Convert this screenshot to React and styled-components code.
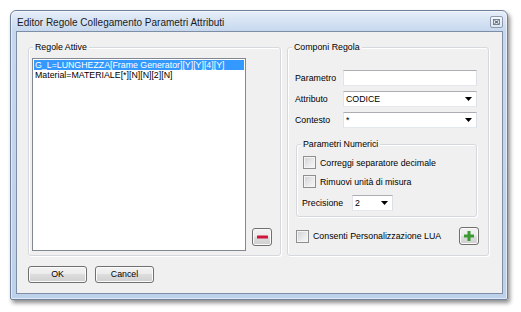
import React from "react";
import styled, { createGlobalStyle } from "styled-components";

const GlobalStyle = createGlobalStyle`
  html, body {
    margin: 0;
    padding: 0;
    background: #ffffff;
  }
  body {
    font-family: "Liberation Sans", Arial, sans-serif;
    font-size: 8.8px;
    color: #000;
  }
`;

const Desktop = styled.div`
  width: 521px;
  height: 312px;
  box-sizing: border-box;
  padding: 10px 0 0 10px;
  overflow: hidden;
`;

const Window = styled.div`
  width: 498px;
  height: 290px;
  box-sizing: border-box;
  border: 1px solid #6e809a;
  border-radius: 6px 6px 2px 2px;
  background: linear-gradient(
    to bottom,
    #e6eef8 0px,
    #d6e3f3 10px,
    #c7d8ee 20px,
    #bed1ea 100%
  );
  box-shadow: 2px 3px 4px rgba(0, 0, 0, 0.45),
    inset 0 0 0 1px rgba(255, 255, 255, 0.55);
  padding: 0 4px 5px 5px;
  display: flex;
  flex-direction: column;
`;

const TitleBar = styled.div`
  height: 20px;
  display: flex;
  align-items: center;
  justify-content: space-between;
  padding-left: 1px;
`;

const Title = styled.span`
  font-size: 10px;
  color: #1b1b1b;
  margin-top: 2px;
`;

const CloseButton = styled.div`
  width: 13px;
  height: 12px;
  box-sizing: border-box;
  border: 1px solid #8d9ab0;
  border-radius: 2px;
  background: linear-gradient(#f5f8fb, #dde5ef);
  display: flex;
  align-items: center;
  justify-content: center;
  margin-top: 2px;
`;

const Client = styled.div`
  flex: 1;
  border: 1px solid #7d8ea6;
  background: #f0f0f0;
  padding: 15px 13px 10px 11px;
  display: flex;
  flex-direction: column;
`;

const TopRow = styled.div`
  height: 209px;
  display: flex;
  gap: 6px;
`;

const GroupBox = styled.div`
  position: relative;
  box-sizing: border-box;
  width: ${(p) => p.$width}px;
  border: 1px solid #d5d9dd;
  border-radius: 3px;
  box-shadow: 1px 1px 0 #ffffff, inset 1px 1px 0 #ffffff;
  padding: ${(p) => p.$padding};
  margin: ${(p) => p.$margin || "0"};
`;

const Legend = styled.span`
  position: absolute;
  top: -6px;
  left: ${(p) => p.$left || 4}px;
  padding: 0 2px;
  line-height: 11px;
  background: #f0f0f0;
  white-space: nowrap;
`;

const LeftInner = styled.div`
  display: flex;
  align-items: flex-end;
  height: 100%;
`;

const ListBox = styled.div`
  width: 214px;
  height: 193px;
  box-sizing: border-box;
  border: 1px solid #828790;
  background: #ffffff;
  padding: 1px 1px 0 1px;
`;

const ListItem = styled.div`
  height: 10px;
  line-height: 10px;
  padding-left: 1px;
  white-space: nowrap;
  background: ${(p) => (p.$selected ? "#3399ff" : "transparent")};
  color: ${(p) => (p.$selected ? "#ffffff" : "#000000")};
`;

const ToolButton = styled.div`
  width: 20px;
  height: 18px;
  box-sizing: border-box;
  border: 1px solid #707070;
  border-radius: 3px;
  background: linear-gradient(
    #f2f2f2 0%,
    #ebebeb 50%,
    #dddddd 50%,
    #cfcfcf 100%
  );
  box-shadow: inset 0 0 0 1px #fafafa;
  display: flex;
  align-items: center;
  justify-content: center;
  margin: ${(p) => p.$margin || "0"};
  flex-shrink: 0;
`;

const FormGrid = styled.div`
  display: grid;
  grid-template-columns: 48px 134px;
  row-gap: 5px;
  align-items: center;
`;

const Label = styled.span`
  white-space: nowrap;
  width: ${(p) => (p.$width ? `${p.$width}px` : "auto")};
  flex-shrink: 0;
`;

const Field = styled.div`
  position: relative;
  box-sizing: border-box;
  height: 16px;
  width: ${(p) => (p.$width ? `${p.$width}px` : "auto")};
  border: 1px solid;
  border-color: #abadb3 #dbdfe6 #e3e9ef #e2e3ea;
  background: #ffffff;
  display: flex;
  align-items: center;
  justify-content: space-between;
  padding: 0 4px 0 2px;
`;

const FieldText = styled.span`
  line-height: 14px;
`;

const CheckRow = styled.div`
  display: flex;
  align-items: center;
  gap: 4px;
  height: 13px;
  margin-top: ${(p) => p.$top || 0}px;
`;

const CheckBox = styled.div`
  width: 13px;
  height: 13px;
  box-sizing: border-box;
  border: 1px solid #8e8f8f;
  background: linear-gradient(135deg, #cdd0d5 0%, #e8e9eb 55%, #f8f8f8 100%);
  box-shadow: inset 0 0 0 1px #f4f4f4;
  flex-shrink: 0;
  margin-left: ${(p) => p.$left || 0}px;
`;

const PrecisionRow = styled.div`
  display: flex;
  align-items: center;
  margin-top: 7px;
  margin-left: -1px;
`;

const LuaRow = styled.div`
  display: flex;
  align-items: center;
  justify-content: space-between;
  height: 18px;
  margin-top: 10px;
  margin-right: -2px;
`;

const LuaLabel = styled.div`
  display: flex;
  align-items: center;
  gap: 4px;
`;

const ButtonRow = styled.div`
  display: flex;
  gap: 8px;
  margin-top: 10px;
`;

const DialogButton = styled.div`
  width: 59px;
  height: 17px;
  box-sizing: border-box;
  border: 1px solid #707070;
  border-radius: 3px;
  background: linear-gradient(
    #f2f2f2 0%,
    #ebebeb 50%,
    #dddddd 50%,
    #cfcfcf 100%
  );
  box-shadow: inset 0 0 0 1px #fbfbfb;
  display: flex;
  align-items: center;
  justify-content: center;
  line-height: 15px;
`;

const Arrow = () => (
  <svg width="7" height="4" viewBox="0 0 7 4">
    <polygon points="0,0 7,0 3.5,4" fill="#000" />
  </svg>
);

const rules = [
  "G_L=LUNGHEZZA[Frame Generator][Y][Y][4][Y]",
  "Material=MATERIALE[*][N][N][2][N]",
];

export default function App() {
  return (
    <Desktop>
      <GlobalStyle />
      <Window>
        <TitleBar>
          <Title>Editor Regole Collegamento Parametri Attributi</Title>
          <CloseButton>
            <svg width="7" height="6" viewBox="0 0 7 6">
              <rect x="0.5" y="0.5" width="6" height="5" fill="none" stroke="#5b6b82" strokeWidth="0.8" />
              <path d="M1.5 1.3 L5.5 4.7 M5.5 1.3 L1.5 4.7" stroke="#2d3a4d" strokeWidth="0.9" />
            </svg>
          </CloseButton>
        </TitleBar>
        <Client>
          <TopRow>
            <GroupBox $width={253} $padding="10px 0 4px 3px">
              <Legend $left={4}>Regole Attive</Legend>
              <LeftInner>
                <ListBox>
                  {rules.map((r, i) => (
                    <ListItem key={r} $selected={i === 0}>
                      {r}
                    </ListItem>
                  ))}
                </ListBox>
                <ToolButton $margin="0 0 5px 6px">
                  <svg width="11" height="4" viewBox="0 0 11 4">
                    <rect x="0" y="0.5" width="11" height="3" rx="0.5" fill="#d0143c" />
                  </svg>
                </ToolButton>
              </LeftInner>
            </GroupBox>
            <GroupBox $width={202} $padding="22px 11px 0 7px">
              <Legend $left={4}>Componi Regola</Legend>
              <FormGrid>
                <Label>Parametro</Label>
                <Field />
                <Label>Attributo</Label>
                <Field>
                  <FieldText>CODICE</FieldText>
                  <Arrow />
                </Field>
                <Label>Contesto</Label>
                <Field>
                  <FieldText>*</FieldText>
                  <Arrow />
                </Field>
              </FormGrid>
              <GroupBox $width={181} $padding="11px 0 5px 6px" $margin="16px 0 0 1px">
                <Legend $left={4}>Parametri Numerici</Legend>
                <CheckRow>
                  <CheckBox />
                  <span>Correggi separatore decimale</span>
                </CheckRow>
                <CheckRow $top={6}>
                  <CheckBox />
                  <span>Rimuovi unità di misura</span>
                </CheckRow>
                <PrecisionRow>
                  <Label $width={50}>Precisione</Label>
                  <Field $width={41}>
                    <FieldText>2</FieldText>
                    <Arrow />
                  </Field>
                </PrecisionRow>
              </GroupBox>
              <LuaRow>
                <LuaLabel>
                  <CheckBox $left={1} />
                  <span>Consenti Personalizzazione LUA</span>
                </LuaLabel>
                <ToolButton>
                  <svg width="10" height="10" viewBox="0 0 10 10">
                    <path d="M3.5 0 H6.5 V3.5 H10 V6.5 H6.5 V10 H3.5 V6.5 H0 V3.5 H3.5 Z" fill="#3c9a34" />
                  </svg>
                </ToolButton>
              </LuaRow>
            </GroupBox>
          </TopRow>
          <ButtonRow>
            <DialogButton>OK</DialogButton>
            <DialogButton>Cancel</DialogButton>
          </ButtonRow>
        </Client>
      </Window>
    </Desktop>
  );
}
